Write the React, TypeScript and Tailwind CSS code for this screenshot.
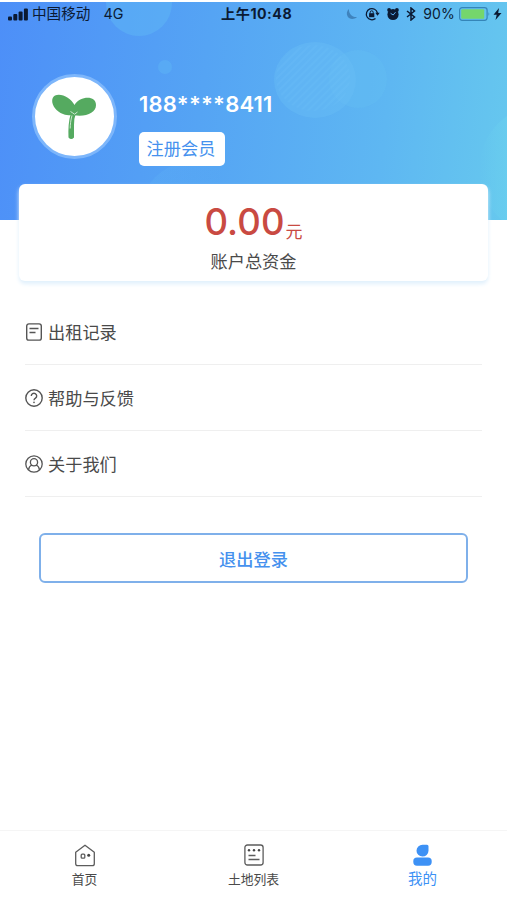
import type { ReactNode } from "react";

const SignalIcon = () => (
  <svg width="20" height="13" viewBox="0 0 20 13" fill="#0b1a33">
    <rect x="0" y="8.5" width="4" height="4" rx="1" />
    <rect x="5.3" y="6" width="4" height="6.5" rx="1" />
    <rect x="10.6" y="3.5" width="4" height="9" rx="1" />
    <rect x="15.9" y="0.5" width="4" height="12" rx="1" />
  </svg>
);

const StatusBar = () => (
  <div className="flex h-[24px] items-center pl-2 pr-[5px] text-[14.6px] leading-none text-[#0b1a33]">
    <div className="flex w-[213px] items-center">
      <SignalIcon />
      <span className="ml-[4px]">中国移动</span>
      <span className="ml-[13px] text-[14.3px]">4G</span>
    </div>
    <div className="text-[14.2px] font-bold tracking-[0.5px] whitespace-nowrap">上午10:48</div>
    <div className="ml-auto flex items-center">
      <svg width="12" height="12" viewBox="0 0 12 12" fill="#3f83bd">
        <path d="M3 1C.8 2.800 .2 5.800 1.500 8.300c1.700 3.200 6.500 3.700 9.500 .7C6.500 9.500 2.500 6 3 1z" />
      </svg>
      <svg className="ml-[7px]" width="15" height="14" viewBox="0 0 15 14" fill="none" stroke="#0b1a33" strokeWidth="1.3">
        <path d="M10.500 11.500A5.600 5.600 0 1 1 12.400 6" />
        <path d="M10.300 5.800h4.400l-2.200 3z" fill="#0b1a33" stroke="none" />
        <rect x="4.100" y="6.200" width="5.200" height="4" fill="#0b1a33" stroke="none" />
        <path d="M5.200 6.500V5.300a1.500 1.500 0 0 1 3 0v1.200" strokeWidth="1" />
      </svg>
      <svg className="ml-[6px]" width="14" height="14" viewBox="0 0 14 14" fill="#0b1a33">
        <circle cx="7" cy="7.500" r="5.600" />
        <circle cx="3.100" cy="3" r="1.900" />
        <circle cx="10.900" cy="3" r="1.900" />
        <path d="M4.600 6.300l2.600 1.700 2.300-2.800" fill="none" stroke="#59adf4" strokeWidth="1" />
      </svg>
      <svg className="ml-[6px]" width="10" height="14" viewBox="0 0 10 14" fill="none" stroke="#0b1a33" strokeWidth="1.500">
        <path d="M1 4l7.500 6L5 13V1l3.500 3L1 10" />
      </svg>
      <span className="ml-[7px] text-[14px] tracking-[0.2px]">90%</span>
      <svg className="ml-[4px]" width="32" height="14" viewBox="0 0 32 14">
        <rect x=".6" y=".7" width="27.500" height="12.600" rx="2.500" fill="none" stroke="#3585b8" strokeWidth="1.200" />
        <rect x="2.200" y="2.300" width="23" height="9.400" rx="1" fill="#75d66c" />
        <path d="M29.500 5v4q1.800-2 0-4z" fill="#3585b8" />
      </svg>
      <svg className="ml-[2px]" width="9" height="12" viewBox="0 0 9 12" fill="#0b1a33">
        <path d="M6 0L.5 6.800h3.200L2.500 12 8.500 5H5.200z" />
      </svg>
    </div>
  </div>
);

// soft bubbles behind the profile block
const HeaderBubbles = () => (
  <svg className="absolute inset-0" width="507" height="218" viewBox="0 2 507 218">
    <defs>
      <pattern id="hatch" width="5" height="5" patternUnits="userSpaceOnUse" patternTransform="rotate(45)">
        <path d="M1 0v5" stroke="#8fd0fa" strokeWidth="0.8" strokeOpacity="0.2" />
      </pattern>
      <linearGradient id="bottomBubble" x1="0" y1="0" x2="1" y2="0">
        <stop offset="0" stopColor="#66c0f7" stopOpacity="0.2" />
        <stop offset="0.8" stopColor="#66c0f7" stopOpacity="0" />
      </linearGradient>
      <linearGradient id="edgeGlow" x1="0" y1="0" x2="1" y2="0">
        <stop offset="0" stopColor="#6bd1ef" stopOpacity="0" />
        <stop offset="0.25" stopColor="#6bd1ef" stopOpacity="0.6" />
      </linearGradient>
    </defs>
    <circle cx="139" cy="3" r="33" fill="#62bdf6" fillOpacity="0.42" />
    <circle cx="165" cy="67" r="7" fill="#62bdf6" fillOpacity="0.35" />
    <circle cx="358" cy="79" r="29" fill="#66c3f5" fillOpacity="0.25" />
    <ellipse cx="315" cy="80" rx="41" ry="38" fill="#68bdf5" fillOpacity="0.4" />
    <ellipse cx="313" cy="78" rx="37" ry="33" fill="url(#hatch)" />
    <circle cx="192" cy="214" r="52" fill="url(#bottomBubble)" />
    <circle cx="545" cy="170" r="66" fill="url(#edgeGlow)" />
  </svg>
);

const Avatar = () => (
  <div className="flex size-[85px] items-center justify-center rounded-full border-3 border-[#7db6fb] bg-white">
    <svg className="mr-[2px]" width="46" height="48" viewBox="0 0 46 48" fill="#55aa60">
      <path d="M23.500 12C20 5 10-.5 4 2.500c-6 4-2 14.500 8 18.500 4 1.500 7 1.500 11 1.200C35 24 45 20 45 12 45 2 29 3 23.500 12z" />
      <path d="M20 20h5q-2 5-2 12v12.500q-2.800 3-5.500 0c-.3-8 0-17 2.500-24.500z" />
      <path d="M19.500 18.500q2.500 1.500 4 2.700l3-2.200M21 22.500c-1.300 5-1.800 9-1.800 13" fill="none" stroke="#d7edda" strokeWidth="0.9" />
    </svg>
  </div>
);

const RecordIcon = () => (
  <svg width="18" height="18" viewBox="0 0 18 18" fill="none" stroke="#555" strokeWidth="1.400">
    <rect x="1.700" y="0.900" width="14.600" height="16.200" rx="2.200" />
    <path d="M4.500 5.500h9M4.500 9.500h6" />
  </svg>
);

const HelpIcon = () => (
  <svg width="18" height="18" viewBox="0 0 18 18" fill="none" stroke="#555" strokeWidth="1.400">
    <circle cx="9" cy="9" r="8.200" />
    <path d="M6.300 7a2.700 2.700 0 1 1 4.200 2.200C9.300 10 9 10.200 9 11.300" />
    <circle cx="9" cy="13.300" r="0.850" fill="#555" stroke="none" />
  </svg>
);

const AboutIcon = () => (
  <svg width="18" height="18" viewBox="0 0 18 18" fill="none" stroke="#555" strokeWidth="1.300">
    <circle cx="9" cy="9" r="8.200" />
    <circle cx="9" cy="7.300" r="3.600" />
    <path d="M3.500 14.800c.3-2.500 1.700-4.200 3.500-4.800M14.500 14.800c-.3-2.500-1.700-4.200-3.500-4.800" />
  </svg>
);

const HomeIcon = () => (
  <svg width="22" height="23" viewBox="0 0 22 23" fill="none" stroke="#5c5c5c" strokeWidth="1.300">
    <path d="M1.700 8.200L11 1.200l9.300 7v11.500q0 2-2 2H3.700q-2 0-2-2z" strokeLinejoin="round" />
    <rect x="7.200" y="10.200" width="3.600" height="4" rx="1" />
    <circle cx="14.700" cy="11.300" r="1.500" fill="#444" stroke="none" />
  </svg>
);

const ListIcon = () => (
  <svg width="20" height="22" viewBox="0 0 20 22" fill="none" stroke="#5c5c5c" strokeWidth="1.300">
    <rect x="0.900" y="1" width="18.200" height="20" rx="2.500" />
    <path d="M4.500 11.500h7M4.500 15.500h11" />
    <g fill="#444" stroke="none">
      <circle cx="5" cy="6.300" r="1.200" />
      <circle cx="10" cy="6.300" r="1.200" />
      <circle cx="15" cy="6.300" r="1.200" />
    </g>
  </svg>
);

const MineIcon = () => (
  <svg width="19" height="22" viewBox="0 0 19 22" fill="#3d91f5">
    <path d="M9.500 .8H14q1.500 0 1.500 1.500v4.500A6 5.900 0 1 1 9.500 .8z" />
    <rect x="0.300" y="13.400" width="18.400" height="8.300" rx="3.700" />
  </svg>
);

const MenuRow = ({ icon, label }: { icon: ReactNode; label: string }) => (
  <div className="flex h-[66px] items-center gap-[5px] border-b border-[#efefef] text-[17.2px] text-[#4a4a4a]">
    {icon}
    <span className="pt-[2px]">{label}</span>
  </div>
);

const App = () => {
  return (
    <div className="flex h-[900px] w-[507px] flex-col overflow-hidden bg-white pt-[2px] font-[Inter,'Noto_Sans_CJK_SC',sans-serif]">
      <header className="relative h-[218px] shrink-0 bg-linear-[97deg,#4d8ff8_0%,#55a4f4_40%,#5eb7f2_75%,#66c8ee_100%]">
        <HeaderBubbles />
        <div className="relative">
          <StatusBar />
          <div className="flex pl-[32px] pt-[48px]">
            <Avatar />
            <div className="ml-[22px] flex flex-col items-start pt-[16px]">
              <div className="h-[28px] text-[22px] font-semibold leading-[28px] tracking-[0.2px] text-white">
                188****8411
              </div>
              <div className="mt-[14px] flex h-[34px] w-[86px] items-center justify-center rounded-[5px] bg-white pr-[2px] text-[17.2px] text-[#4591ee]">
                注册会员
              </div>
            </div>
          </div>
        </div>
      </header>

      <section className="relative mx-[19px] mt-[-36px] flex h-[97px] shrink-0 flex-col items-center rounded-[6px] bg-white shadow-[0_3px_4px_0px_#e0f0fc]">
        <div className="mt-[16px] flex h-[44px] items-baseline text-[#c94a42]">
          <span className="text-[36.5px] font-[450] leading-[44px] tracking-[0.1px]">0.00</span>
          <span className="relative top-[3px] ml-px text-[17px]">元</span>
        </div>
        <div className="mt-[5px] text-[17.2px] leading-[26px] text-[#4a4a4a]">账户总资金</div>
      </section>

      <div className="mt-[18px] px-[25px]">
        <MenuRow icon={<RecordIcon />} label="出租记录" />
        <MenuRow icon={<HelpIcon />} label="帮助与反馈" />
        <MenuRow icon={<AboutIcon />} label="关于我们" />
      </div>

      <button className="mx-[39px] mt-[36px] h-[50px] shrink-0 rounded-[6px] border-2 border-[#7fb0ea] pt-[3px] text-[17.2px] font-medium text-[#4591ee]">
        退出登录
      </button>

      <nav className="mt-auto grid h-[70px] shrink-0 grid-cols-3 border-t border-[#f5f5f5] text-[12.8px] text-[#4a4a4a]">
        <div className="flex flex-col items-center pt-[13px]">
          <HomeIcon />
          <span className="mt-[3px] leading-[20px]">首页</span>
        </div>
        <div className="flex flex-col items-center pt-[13px]">
          <ListIcon />
          <span className="mt-[4px] leading-[20px]">土地列表</span>
        </div>
        <div className="flex flex-col items-center pt-[13px] text-[#3d91f5]">
          <MineIcon />
          <span className="mt-[3px] text-[14.5px] leading-[20px]">我的</span>
        </div>
      </nav>
    </div>
  );
};

export default App;
